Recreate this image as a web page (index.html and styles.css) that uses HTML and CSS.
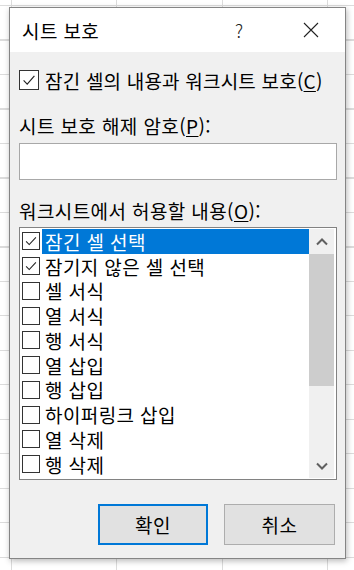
FILE: index.html
```html
<!DOCTYPE html>
<html lang="ko">
<head>
  <meta charset="UTF-8">
  <title>시트 보호</title>
  <link rel="stylesheet" href="styles.css">
</head>
<body>
  <div class="dialog" role="dialog" aria-label="시트 보호">
    <!-- Title bar -->
    <div class="dialog-titlebar">
      <span class="dialog-title">시트 보호</span>
      <span class="title-help">?</span>
      <span class="title-close">
        <svg width="16" height="16" viewBox="0 0 16 16"><path d="M1 1 L15 15 M15 1 L1 15" stroke="#222" stroke-width="1.1" fill="none"/></svg>
      </span>
    </div>

    <div class="dialog-body">
      <label class="check-row main-check">
        <span class="checkbox checkbox-lg">
          <svg viewBox="0 0 20 20"><path d="M4 10.5 L8 14.5 L16 5.5" stroke="#222" stroke-width="1.3" fill="none"/></svg>
        </span>
        <span>잠긴 셀의 내용과 워크시트 보호(<u>C</u>)</span>
      </label>

      <div class="field-label">시트 보호 해제 암호(<u>P</u>):</div>
      <div class="text-input"></div>

      <div class="field-label field-label-list">워크시트에서 허용할 내용(<u>O</u>):</div>

      <div class="listbox">
        <div class="list-items">
          <div class="list-item">
            <span class="checkbox"><svg viewBox="0 0 18 18"><path d="M3.5 9.5 L7 13 L14.5 5" stroke="#222" stroke-width="1.2" fill="none"/></svg></span>
            <span class="item-text selected">잠긴 셀 선택</span>
          </div>
          <div class="list-item">
            <span class="checkbox"><svg viewBox="0 0 18 18"><path d="M3.5 9.5 L7 13 L14.5 5" stroke="#222" stroke-width="1.2" fill="none"/></svg></span>
            <span class="item-text">잠기지 않은 셀 선택</span>
          </div>
          <div class="list-item"><span class="checkbox"></span><span class="item-text">셀 서식</span></div>
          <div class="list-item"><span class="checkbox"></span><span class="item-text">열 서식</span></div>
          <div class="list-item"><span class="checkbox"></span><span class="item-text">행 서식</span></div>
          <div class="list-item"><span class="checkbox"></span><span class="item-text">열 삽입</span></div>
          <div class="list-item"><span class="checkbox"></span><span class="item-text">행 삽입</span></div>
          <div class="list-item"><span class="checkbox"></span><span class="item-text">하이퍼링크 삽입</span></div>
          <div class="list-item"><span class="checkbox"></span><span class="item-text">열 삭제</span></div>
          <div class="list-item"><span class="checkbox"></span><span class="item-text">행 삭제</span></div>
        </div>

        <div class="scrollbar">
          <div class="scroll-btn">
            <svg width="12" height="8" viewBox="0 0 12 8"><path d="M1 6.5 L6 1.5 L11 6.5" stroke="#606060" stroke-width="2" fill="none"/></svg>
          </div>
          <div class="scroll-thumb"></div>
          <div class="scroll-track"></div>
          <div class="scroll-btn">
            <svg width="12" height="8" viewBox="0 0 12 8"><path d="M1 1.5 L6 6.5 L11 1.5" stroke="#606060" stroke-width="2" fill="none"/></svg>
          </div>
        </div>
      </div>

      <div class="dialog-footer">
        <button class="button button-default">확인</button>
        <button class="button">취소</button>
      </div>
    </div>
  </div>
</body>
</html>
```

FILE: styles.css
```css
:root {
  --face: #f0f0f0;
  --accent: #0078d7;
  --grid: #dcdcdc;
  --row-height: 24.75px;
}

body {
  margin: 0;
  padding: 7px 0 0 9px;
  height: 570px;
  box-sizing: border-box;
  overflow: hidden;
  font-family: "Noto Sans CJK KR", "Noto Sans", sans-serif;
  color: #000;
  background-color: #fff;
  background-image:
    repeating-linear-gradient(to right, var(--grid) 0 1px, transparent 1px 105.33px),
    repeating-linear-gradient(to bottom, var(--grid) 0 1px, transparent 1px 34.5px);
  background-position: 11px 0, 0 5px;
}

/* Dialog frame */
.dialog {
  width: 337px;
  height: 552px;
  box-sizing: border-box;
  border: 1px solid #858585;
  background: var(--face);
  box-shadow: 1px 2px 6px rgba(0,0,0,0.28);
  display: flex;
  flex-direction: column;
}

.dialog-titlebar {
  height: 44px;
  background: #fff;
  display: flex;
  align-items: center;
  padding: 0 0 0 12px;
}

.dialog-title {
  font-size: 19px;
  letter-spacing: 0.4px;
  flex: 1;
}

.title-help {
  font-size: 18px;
  font-weight: 300;
  color: #222;
  width: 10px;
  margin-right: 58px;
}

.title-close {
  width: 16px;
  height: 16px;
  margin-right: 26px;
  display: flex;
}

.dialog-body {
  flex: 1;
  padding: 0 8px 0 9px;
  display: flex;
  flex-direction: column;
  font-size: 19px;
  letter-spacing: 0.4px;
}

u {
  text-underline-offset: 2px;
}

/* Checkboxes */
.check-row {
  display: flex;
  align-items: center;
  gap: 6px;
  height: 20px;
  margin-top: 18px;
  white-space: nowrap;
}

.main-check {
  letter-spacing: 0.2px;
}

.checkbox {
  width: 18px;
  height: 18px;
  box-sizing: border-box;
  border: 1px solid #333;
  background: #fff;
  flex: none;
  display: flex;
}

.checkbox svg {
  width: 100%;
  height: 100%;
}

.checkbox-lg {
  width: 20px;
  height: 20px;
}

.field-label {
  height: 20px;
  line-height: 20px;
  margin-top: 26px;
}

.field-label-list {
  margin-top: 21px;
}

.text-input {
  height: 37px;
  margin-top: 7px;
  box-sizing: border-box;
  border: 1px solid #a8a8a8;
  background: #fff;
}

/* List box */
.listbox {
  height: 253px;
  margin-top: 6px;
  box-sizing: border-box;
  border: 1px solid #828282;
  background: #fff;
  padding: 1px 2px 1px 1px;
  display: flex;
}

.list-items {
  flex: 1;
  display: flex;
  flex-direction: column;
}

.list-item {
  height: var(--row-height);
  display: flex;
  align-items: center;
  padding-left: 1px;
  gap: 2px;
}

.item-text {
  flex: 1;
  align-self: stretch;
  display: flex;
  align-items: center;
  padding-left: 3px;
}

.item-text.selected {
  background: var(--accent);
  color: #fff;
}

.scrollbar {
  width: 25px;
  background: var(--face);
  display: flex;
  flex-direction: column;
}

.scroll-btn {
  height: 25px;
  display: flex;
  align-items: center;
  justify-content: center;
}

.scroll-thumb {
  height: 132px;
  background: #cdcdcd;
}

.scroll-track {
  flex: 1;
}

/* Footer buttons */
.dialog-footer {
  display: flex;
  justify-content: flex-end;
  gap: 16px;
  margin-top: 24px;
  padding-right: 2px;
}

.button {
  width: 111px;
  height: 41px;
  box-sizing: border-box;
  border: 1px solid #adadad;
  background: #e1e1e1;
  font-family: inherit;
  font-size: 19px;
  letter-spacing: 0.4px;
  color: #000;
  padding: 0;
}

.button-default {
  width: 110px;
  border: 2px solid var(--accent);
}
```
